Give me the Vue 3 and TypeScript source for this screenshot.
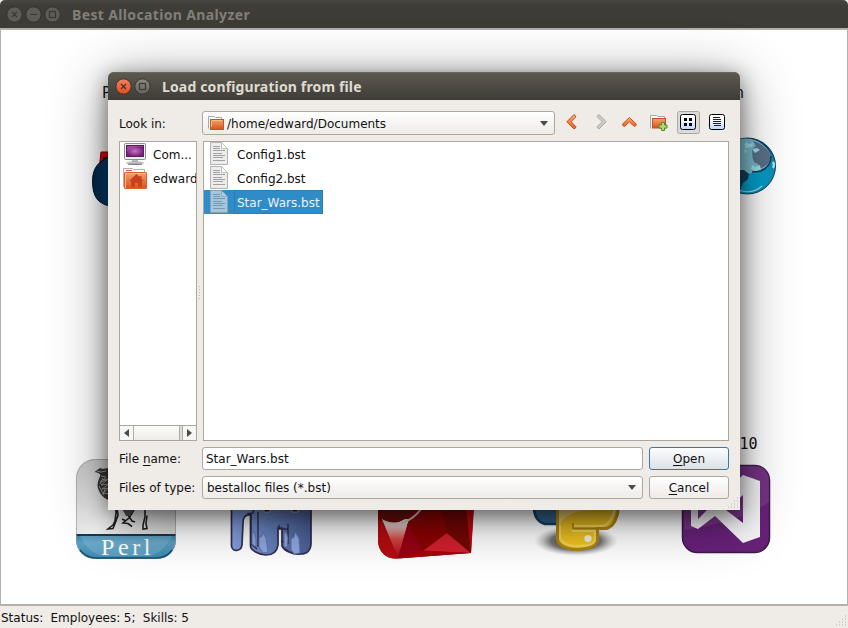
<script setup lang="ts">
import { ref } from 'vue'

interface Entry { name: string }

const files: Entry[] = [
  { name: 'Config1.bst' },
  { name: 'Config2.bst' },
  { name: 'Star_Wars.bst' },
]
const selected = ref('Star_Wars.bst')
const fileName = ref('Star_Wars.bst')
</script>

<template>
  <div class="desktop">
    <header class="titlebar main-title">
      <svg width="60" height="28" viewBox="0 0 60 28">
        <g fill="#5e5c56" stroke="#33322e">
          <circle cx="14.5" cy="14.5" r="7.7" /><circle cx="33.5" cy="14.5" r="7.7" /><circle cx="52.5" cy="14.5" r="7.7" />
        </g>
        <g fill="none" stroke="#393833" stroke-width="1.2">
          <path d="M12 12l5 5M17 12l-5 5M30 14.5h7" /><rect x="49.5" y="11.5" width="6" height="6" />
        </g>
      </svg>
      <span class="main-caption">Best Allocation Analyzer</span>
    </header>

    <main class="canvas">
      <svg class="art" width="846" height="574" viewBox="1 30 846 574">
        <defs>
          <linearGradient id="perlBg" x1="0" y1="0" x2="1" y2="1"><stop offset="0" stop-color="#c4c4c4" /><stop offset=".45" stop-color="#f4f4f4" /><stop offset="1" stop-color="#cfcfcf" /></linearGradient>
          <linearGradient id="perlBlue" x1="0" y1="0" x2="0" y2="1"><stop offset="0" stop-color="#397fa7" /><stop offset=".35" stop-color="#5aa0c3" /><stop offset="1" stop-color="#3d89b0" /></linearGradient>
          <radialGradient id="globe" cx=".52" cy=".72" r=".65"><stop offset="0" stop-color="#00a9d5" /><stop offset=".55" stop-color="#0799c5" /><stop offset=".85" stop-color="#1f82a2" /><stop offset="1" stop-color="#0b4a6c" /></radialGradient>
          <linearGradient id="elephant" x1="0" y1="0" x2="1" y2="0"><stop offset="0" stop-color="#86a1e2" /><stop offset=".5" stop-color="#647fba" /><stop offset="1" stop-color="#4a5d94" /></linearGradient>
          <linearGradient id="facet" gradientUnits="userSpaceOnUse" x1="0" y1="520" x2="0" y2="558"><stop offset="0" stop-color="#e4dcda" /><stop offset=".2" stop-color="#dfb9b6" /><stop offset=".5" stop-color="#d44b45" /><stop offset="1" stop-color="#ab0011" /></linearGradient>
          <linearGradient id="gold" x1="0" y1="0" x2="0" y2="1"><stop offset="0" stop-color="#d6aa20" /><stop offset="1" stop-color="#f3c91f" /></linearGradient>
          <radialGradient id="ground"><stop offset="0" stop-color="#222" /><stop offset=".6" stop-color="#555" stop-opacity=".8" /><stop offset="1" stop-color="#aaa" stop-opacity="0" /></radialGradient>
          <linearGradient id="navy" x1="0" y1="0" x2="1" y2="0"><stop offset="0" stop-color="#052343" /><stop offset="1" stop-color="#07477d" /></linearGradient>
          <clipPath id="perlClip"><rect x="76" y="459" width="100" height="100" rx="19" /></clipPath>
        </defs>

        <text class="node-text" x="102" y="98">P</text>
        <text class="node-text" x="744" y="98" text-anchor="end">Python</text>
        <text class="node-text" x="757.5" y="449" text-anchor="end">C# 10</text>

        <path d="M100 161l1-9h12v18h-13z" fill="#df0b0e" stroke="#8e0004" />
        <path d="M103 157h7v6h-7z" fill="#4a090d" />
        <path d="M110 157c-10 3-17.500 10-17.500 24 0 15 5 23 18 25z" fill="url(#navy)" stroke="#02152e" />
        <path d="M110 163c-6 9-8 23-5 36" fill="none" stroke="#05416f" stroke-width="3" opacity=".5" />

        <circle cx="747.5" cy="166" r="28" fill="url(#globe)" stroke="#073b5c" />
        <path d="M738 140c17-6 33 9 33 18-1 8-6 13-14 14-6 3-19 1-21-4z" fill="#7ebdcf" />
        <path d="M753 141c10 3 18 10 18 18-1 5-6 8-12 10 1-3-1-6-4-6-4-5-2-10-3-14l4-3z" fill="#5b7289" />
        <path d="M771 156c0 12-10 15-19 16 9 1 19-3 19-16" fill="#143a62" stroke="#123e5b" />
        <path d="M738 170l6 0 5 4-1 5-5 4-3 8h-2z" fill="#16405f" />
        <path d="M745 142l4 2 5-1-2 4-7 1zM752 149l5-1 3 2-5 3zM752 165l4 2 4-2 1 5-6 1-4-2zM744 149l3 2-2 3z" fill="#9de3ea" />
        <path d="M773 162q2 3 0 6" fill="none" stroke="#9be9f5" stroke-width="2.4" />
        <path d="M738 190q14 5 24-4" fill="none" stroke="#9fdcea" stroke-width="1.1" />

        <g clip-path="url(#perlClip)">
          <rect x="76" y="459" width="100" height="100" fill="url(#perlBg)" />
          <rect x="76" y="534" width="100" height="25" fill="url(#perlBlue)" />
          <path d="M76 535h100" stroke="#173a4d" stroke-width="2" />
          <path d="M80 536h92q-11 20-26 20H106q-16 0-26-20" fill="#8bc0d6" opacity=".35" />
        </g>
        <rect x="76.5" y="459.5" width="99" height="99" rx="19" fill="none" stroke="#8f999d" opacity=".6" />
        <path d="M80 550q6 8 17 8h58q12 0 17-8" fill="none" stroke="#195070" stroke-width="1.5" />
        <text class="perl-text" x="101" y="555">Perl</text>
        <path d="M94.5 472l4-3 2-1 2 1 6-1v32c-6-2-10-8-11-14 0-5 2-8 3-11l-2-2z" fill="#383838" />
        <path d="M97 471l4 1 5-1M101 476l5 1-3 3 6-1M100 482l7-2-6 5 8-1-7 5 7-1-6 5 6 1M99 486l5 9M103 478l-3 6M105 489l-2 6" fill="none" stroke="#aaa" stroke-width=".9" />
        <path d="M116 508v5l-1 8-2 4-5 4 5-.5 2-5 3-8-1-7M123 509l5 6 4 6 3 1M134 510l-5 8-6 5 5 .5 4 3M126 521l-4-2M145 510v7l-2 8 0 4 4-.5-1-5 1-8" fill="none" stroke="#222" stroke-width="1.6" />
        <path d="M122 508h12l-4 8h-4z" fill="#555" />

        <path d="M231.5 500H311V543C311 550 307 554 301 554C292 555 284 550 282 546V528H278V545C277 552 272 555 266 555C259 555 250.500 550 250.500 546V515C245 514 243 518 243 523L242 545C241 552 232 552 231.500 546Z" fill="url(#elephant)" stroke="#302d50" stroke-width="1.7" />
        <path d="M251 514v30l6 5M258 512v35M279 525v4h9M288 524v19l-7-2M247 514l6-1 1-5" fill="none" stroke="#302d50" stroke-width="1.4" />
        <path d="M264 508h6v4h-6zM292 508h6v4h-6z" fill="#222" stroke="#aaa" />
        <path d="M252 544v-10l2-3 2 8v8zM259 547v-9l3-2 1-4 3 6 2 14-5 1zM284 547v-13l2-3 2 7-1 9zM291 549v-10l3-2 1-5 4 6 1 15-6 1z" fill="#8ea6e0" stroke="#5a6d9f" stroke-width=".8" />

        <path d="M378 501h96l-3 52-73 5.500c-14 1-20-9-20-18z" fill="#8b0302" />
        <path d="M378 520l5 2 15 36.500q-18 1-20-18z" fill="#b50c11" />
        <path d="M382 519h27l-11 39.500z" fill="url(#facet)" />
        <path d="M381 502h38q-10 20-26 21-12 1-12-11z" fill="#6a0f0d" />
        <path d="M408 523l15 28-25 7z" fill="#960113" />
        <path d="M408 522l14-14h19l6 25z" fill="#8a0504" />
        <path d="M447 533l24 20-48-2z" fill="#d21f2e" />
        <path d="M398 558.500l25-8 48 2.500z" fill="#a80007" />
        <path d="M441 505l25 4 5 44-24-20z" fill="#740704" />
        <path d="M466 508h8l-3 45z" fill="#bd0911" />
        <path d="M383 521q9 4 19 2 11-3 20-15" fill="none" stroke="#d5cecb" stroke-width="2" />

        <ellipse cx="576" cy="541" rx="42" ry="15" fill="url(#ground)" />
        <path d="M534 504h27v20h-16q-11-3-11-17" fill="#326387" stroke="#153f66" stroke-width="2.5" />
        <path d="M557.5 505h61c0 12-5 22-12 23.500h-9v10c0 8-8 10-20 11-12 0-20-5-20-11z" fill="url(#gold)" stroke="#ad8614" stroke-width="3" />
        <path d="M559 527c3-10 14-16 28-17h-28z" fill="#e5c880" opacity=".75" />
        <path d="M560 525v14q5 7 17 7 17 0 18-6v-9h-22v-5h30q8-2 12-17" fill="none" stroke="#f0d460" stroke-width="2" />
        <path d="M573 523v5.500h26" fill="none" stroke="#a88110" stroke-width="1.8" />
        <circle cx="588" cy="538.5" r="3.6" fill="#f0efde" />

        <rect x="682.5" y="465.5" width="87" height="87" rx="15" fill="#68217a" stroke="#3e184b" stroke-width="1.5" />
        <path d="M684 530Q740 522 769 502V480q0-14-15-14H698q-14 0-14 14z" fill="#864c91" opacity=".45" />
        <path d="M691 488l7-4 18 16 27-25 17 6v56l-17 6-28-27-17 13-7-3zM698 501v18l9-9zM743 495l-17 15 17 13z" fill="#f5f4f6" fill-rule="evenodd" />
      </svg>
    </main>

    <footer class="status">Status:&nbsp; Employees: 5;&nbsp; Skills: 5</footer>
    <svg class="grip main-grip" width="12" height="12" viewBox="0 0 12 12"><path d="M10 1h1M7 4h1M10 4h1M4 7h1M7 7h1M10 7h1M1 10h1M4 10h1M7 10h1M10 10h1" stroke="#b8b4ae" /></svg>

    <section class="dialog">
      <header class="titlebar dialog-title">
        <svg width="54" height="28" viewBox="0 0 54 28">
          <defs>
            <linearGradient id="closeRed" x1="0" y1="0" x2="0" y2="1"><stop stop-color="#f58160" /><stop offset="1" stop-color="#e34b1c" /></linearGradient>
            <linearGradient id="btnGray" x1="0" y1="0" x2="0" y2="1"><stop stop-color="#8c8a80" /><stop offset="1" stop-color="#62605a" /></linearGradient>
          </defs>
          <circle cx="15.5" cy="14.5" r="7.7" fill="url(#closeRed)" stroke="#34332e" />
          <circle cx="34.5" cy="14.5" r="7.7" fill="url(#btnGray)" stroke="#34332e" />
          <path d="M13 12l5 5M18 12l-5 5" stroke="#45332c" stroke-width="1.2" />
          <rect x="31.5" y="11.5" width="6" height="6" fill="none" stroke="#3b3a35" stroke-width="1.2" />
        </svg>
        <span class="dialog-caption">Load configuration from file</span>
      </header>

      <div class="body">
        <div class="row top-row">
          <label class="label">Look in:</label>
          <div class="combo path-combo">
            <svg class="folder" width="17" height="16" viewBox="0 0 17 16">
              <defs><linearGradient id="folder" x1="0" y1="0" x2="0" y2="1"><stop stop-color="#f1a66d" /><stop offset="1" stop-color="#db5019" /></linearGradient></defs>
              <path d="M.5 13.500V1.500h6l1 1h6v4" fill="#fff" stroke="#aaa6a1" />
              <rect x="2.5" y="4.5" width="13" height="10" fill="url(#folder)" stroke="#c95423" />
              <path d="M4 5.500h10M3.500 6v6" stroke="#f7bc88" />
            </svg>
            <span>/home/edward/Documents</span>
            <i class="arrow"></i>
          </div>
          <div class="tools">
            <svg width="174" height="24" viewBox="0 0 174 24">
              <defs>
                <linearGradient id="orange" x1="0" y1="0" x2="0" y2="1"><stop stop-color="#fbb26e" /><stop offset="1" stop-color="#f05a28" /></linearGradient>
                <linearGradient id="view" x1="0" y1="0" x2="0" y2="1"><stop offset=".3" stop-color="#fff" /><stop offset="1" stop-color="#b8d7ff" /></linearGradient>
              </defs>
              <path d="M18.8 3.7q1.5.2 2 2.2L16 10.7l5 5q-.3 2-2.2 2.1L11.8 10.8z" fill="url(#orange)" stroke="#c84b20" stroke-linejoin="round" />
              <path d="M44.2 3.7l7 7-7 7.1q-1.7-.3-2-2.1l5-5-5-5q.5-1.8 2-2z" fill="#ccc9c6" stroke="#aaa6a2" stroke-linejoin="round" />
              <path d="M74.4 6.5l7 6.7q-.3 2-2.1 2.2l-4.9-4.6-4.8 4.6q-2-.2-2.2-2.2z" fill="url(#orange)" stroke="#c84b20" stroke-linejoin="round" />
              <g transform="translate(96 3)">
                <path d="M-.5 14.500V1.500h6l1 1h7v4" fill="#fff" stroke="#aaa6a1" />
                <rect x="1.500" y="4.500" width="13" height="9.500" fill="url(#folder)" stroke="#ca4b20" />
                <path d="M10.500 8.500h3v2.500h2.500v3h-2.500v2.500h-3V14H8v-3h2.500z" fill="#b5d67b" stroke="#518c24" />
              </g>
              <rect x="122.5" y=".5" width="22" height="22" rx="2" fill="#dedbd7" stroke="#aaa6a2" />
              <rect x="125.5" y="3.5" width="15" height="15" rx="2" fill="url(#view)" stroke="#000" />
              <path d="M129 7h3v3h-3zM134 7h3v3h-3zM129 12h3v3h-3zM134 12h3v3h-3z" fill="#000" />
              <rect x="154.5" y="3.5" width="15" height="15" rx="2" fill="url(#view)" stroke="#000" />
              <path d="M158 6.5h7M158 8.5h8M158 10.5h8M158 12.5h8M159 14.5h7" stroke="#222" />
            </svg>
          </div>
        </div>

        <div class="panes">
          <div class="places">
            <div class="place">
              <svg width="24" height="24" viewBox="0 0 24 24">
                <defs><radialGradient id="screen"><stop stop-color="#cc70cb" /><stop offset="1" stop-color="#762178" /></radialGradient></defs>
                <rect x="1.5" y="1.5" width="21" height="16" rx="1" fill="#eee" stroke="#8d8d8d" />
                <rect x="3.5" y="3.5" width="17" height="11" fill="url(#screen)" stroke="#591c5d" /><path d="M4 10Q9 3 20 5V4H4z" fill="#dfa0df" opacity=".3" />
                <path d="M9 18h6v3H9z" fill="#bbb" /><ellipse cx="12" cy="21" rx="9" ry="1.8" fill="#aaa" /><path d="M5 22h14" stroke="#444" />
                <path d="M3 21h18" stroke="#ddd" />
              </svg>
              <span class="nudge">Com...</span>
            </div>
            <div class="place">
              <svg width="24" height="24" viewBox="0 0 24 24">
                <path d="M.5 21V2.5h9l1 1h11v4" fill="#fff" stroke="#b4afaa" /><path d="M3 4.5h6" stroke="#e85b2a" />
                <rect x="1.5" y="6.5" width="22" height="16" rx=".6" fill="url(#folder)" stroke="#dc602c" /><path d="M2.5 22V7.5h20" fill="none" stroke="#f9bd83" />
                <path d="M6 15l7.5-7 3 3v-1h2v3l2.500 2h-2v6h-4v-4h-3v4H8v-6z" fill="#c94220" />
              </svg>
              <span class="nudge">edward</span>
            </div>
            <div class="scroll"><i class="step"><b class="left-arrow"></b></i><i class="thumb"></i><i class="track"></i><i class="step"><b class="right-arrow"></b></i></div>
          </div>
          <div class="splitter"></div>
          <div class="files">
            <div v-for="file in files" :key="file.name" class="file" :class="{ active: file.name === selected }" @click="selected = file.name; fileName = file.name">
              <svg class="doc" width="24" height="24" viewBox="0 0 24 24">
                <path d="M.5.5h11L17.5 6.5v16H.5z" fill="#ececec" stroke="#b2b2b2" />
                <path d="M11.5.5v6h6z" fill="#fafafa" stroke="#c0c0c0" />
                <path d="M3 4.5h7M3 6.5h7M3 8.5h12M3 11.5h9M3 13.5h12M3 15.5h10M3 18.5h12" stroke="#a2a2a2" stroke-width="1" />
              </svg>
              <span class="file-name">{{ file.name }}</span>
            </div>
          </div>
        </div>

        <div class="row field-row">
          <label class="label">File <u>n</u>ame:</label>
          <div class="field">{{ fileName }}</div>
          <button class="button primary"><u>O</u>pen</button>
        </div>
        <div class="row type-row">
          <label class="label">Files of type:</label>
          <div class="combo type-combo"><span>bestalloc files (*.bst)</span><i class="arrow"></i></div>
          <button class="button"><u>C</u>ancel</button>
        </div>
      </div>
      <svg class="grip" width="12" height="12" viewBox="0 0 12 12"><path d="M10 1h1M7 4h1M10 4h1M4 7h1M7 7h1M10 7h1M1 10h1M4 10h1M7 10h1M10 10h1" stroke="#b8b4ae" /></svg>
    </section>
  </div>
</template>

<style>
body { margin: 0; overflow: hidden; background: #18171b; }
</style>

<style scoped>
* { box-sizing: border-box; }
.desktop { position: relative; width: 848px; height: 628px; overflow: hidden; display: flex; flex-direction: column; background: #efebe7; color: #111; font: 12px "DejaVu Sans", sans-serif; }
.titlebar { height: 28px; flex: none; display: flex; align-items: center; font-family: "Noto Sans", sans-serif; font-weight: 700; font-size: 14px; white-space: nowrap; }
.main-title { background: linear-gradient(#474640, #3e3d38 20%, #3c3b36); color: #827f77; border-radius: 5px 5px 0 0; }
.main-caption { margin-left: 12px; padding-top: 1px; letter-spacing: .36px; }
.canvas { height: 578px; flex: none; border: solid #b5b0aa; border-width: 2px 1px; background: #fff; }
.art { display: block; }
.node-text { font: 15px "DejaVu Sans Mono", monospace; fill: #111; }
.perl-text { font: 24px "Liberation Serif", serif; letter-spacing: 3.6px; fill: #fff; }
.status { height: 22px; display: flex; align-items: center; padding: 2px 0 0 1px; word-spacing: -.2px; }
.dialog { position: absolute; left: 108px; top: 72px; width: 632px; height: 438px; background: #efebe7; border-radius: 6px 6px 0 0; box-shadow: 0 5px 20px rgba(0,0,0,.48), 0 9px 56px rgba(0,0,0,.44); }
.dialog-title { background: linear-gradient(#5d5a50, #3d3c37); border-radius: 6px 6px 0 0; box-shadow: inset 0 1px #69665c; color: #dfdbd2; }
.dialog-caption { letter-spacing: .14px; padding-top: 1px; }
.body { height: 410px; padding: 11px; display: flex; flex-direction: column; }
.row { display: flex; flex: none; }
.label { width: 83px; flex: none; align-self: center; white-space: nowrap; }
.top-row { height: 24px; }
.top-row .label, .path-combo span, .nudge { padding-top: 2px; }
.combo { display: flex; align-items: center; border: 1px solid #aca7a2; border-radius: 3px; background: linear-gradient(#fff, #eeebe8); padding: 0 6px 0 4px; white-space: nowrap; }
.path-combo { width: 353px; }
.folder { margin: 0 2px 0 1px; }
.arrow { margin-left: auto; border: 4px solid transparent; border-top: 5px solid #4b4b4b; border-bottom: 0; }
.tools { height: 24px; display: flex; }
.panes { height: 300px; margin-top: 6px; display: flex; flex: none; }
.places, .files { border: 1px solid #aaa6a2; background: #fff; }
.places { width: 78px; display: flex; flex-direction: column; overflow: hidden; }
.place { height: 24px; display: flex; align-items: center; padding-left: 3px; gap: 6px; white-space: nowrap; }
.place svg { flex: none; }
.scroll { height: 15px; margin-top: auto; display: flex; border-top: 1px solid #aaa6a2; }
.step { width: 13px; display: flex; align-items: center; justify-content: center; padding-right: 1px; background: #f7f6f5; }
.thumb { width: 47px; border: solid #b1ada9; border-width: 0 1px; background: linear-gradient(#fcfcfc, #eeecea); }
.track { width: 3px; border-right: 1px solid #b1ada9; background: #dedbd7; }
.left-arrow { border: 4px solid transparent; border-right: 5px solid #4b4b4b; border-left: 0; }
.right-arrow { border: 4px solid transparent; border-left: 5px solid #4b4b4b; border-right: 0; }
.splitter { width: 6px; background: radial-gradient(circle, #bbb6b0 .6px, transparent .8px) 1px 0 / 3px 3px; background-clip: content-box; padding: 143px 1px 140px 2px; }
.files { width: 526px; display: flex; flex-direction: column; align-items: flex-start; }
.file { height: 24px; display: flex; align-items: center; padding-left: 6px; }
.file-name { height: 24px; display: flex; align-items: center; padding: 2px 3px 0; }
.active { background: #308cc6; color: #e9f3f9; }
.active .doc { opacity: .62; }
.active .file-name { box-shadow: inset 0 0 0 1px #2a7eb4; }
.field-row { height: 23px; margin-top: 6px; }
.type-row { height: 23px; margin-top: 6px; }
.field { width: 441px; border: 1px solid #aca7a2; border-radius: 3px; background: #fff; display: flex; align-items: center; padding-left: 3px; }
.type-combo { width: 441px; }
.button { width: 80px; height: 23px; margin: 0 0 0 6px; padding: 0; border: 1px solid #aca7a2; border-radius: 3px; background: linear-gradient(#fff, #eeebe9); color: #111; font: inherit; }
.primary { border-color: #3979a5; background: linear-gradient(#fcfdfe, #dbe2e7); }
u { text-underline-offset: 2px; text-decoration-thickness: 1px; }
.grip { position: absolute; right: 1px; bottom: 1px; }
</style>
